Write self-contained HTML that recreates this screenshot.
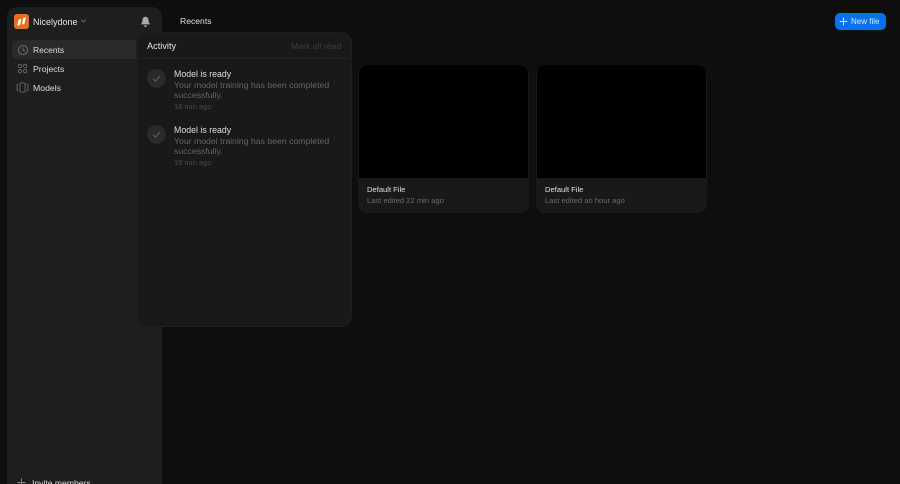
<!DOCTYPE html>
<html>
<head>
<meta charset="utf-8">
<style>
html,body{margin:0;padding:0;width:900px;height:484px;overflow:hidden;background:#0e0e0e;font-family:"Liberation Sans",sans-serif;}
#root{position:relative;width:900px;height:484px;overflow:hidden;background:#0e0e0e;}
.a{position:absolute;white-space:nowrap;}
#sidebar{left:7px;top:7px;width:155px;height:477px;background:#1e1e1e;border-radius:10px 10px 0 0;}
#rowsel{left:12px;top:40px;width:140px;height:19px;background:#2a2a2a;border-radius:5px;}
#logo{left:14px;top:14px;width:15px;height:15px;background:#e8701a;border-radius:3px;}
.t{color:#dcdcdc;font-size:8.7px;line-height:12px;}
.card{width:171px;height:148px;top:65px;background:#191919;border-radius:9px;overflow:hidden;}
.card .img{position:absolute;left:1px;top:0;width:169px;height:113px;background:#000;border-radius:8px 8px 0 0;}
.card .n{position:absolute;left:9px;top:119px;font-size:7.6px;line-height:12px;color:#e0e0e0;white-space:nowrap;}
.card .d{position:absolute;left:9px;top:130px;font-size:7.6px;line-height:12px;color:#6a6a6a;white-space:nowrap;}
#pop{left:137px;top:33px;width:214px;height:293px;background:#191919;border-radius:10px;box-shadow:0 0 0 1px #1e1e1e;}
#line{left:137px;top:58px;width:214px;height:1px;background:#222;}
.circ{width:19px;height:19px;border-radius:50%;background:#2a2a2a;}
.h{font-size:8.8px;line-height:12px;color:#dedede;}
.b{font-size:8.7px;line-height:10px;color:#646464;}
.m{font-size:7.6px;line-height:10px;color:#4a4a4a;}
#btn{left:835px;top:13px;width:51px;height:17px;background:#0a72e8;border-radius:5px;}
</style>
</head>
<body>
<div id="root">
<div class="a" id="sidebar"></div>
<div class="a" id="rowsel"></div>
<div class="a" id="logo"></div>
<svg class="a" style="left:14px;top:14px" width="15" height="15" viewBox="0 0 15 15"><path d="M3.2 11.6 L4.6 6.4 Q5 5 7.4 5 L6.3 10 Q5.9 11.6 3.2 11.6Z M7.8 10.4 L8.9 4.9 Q9.3 3.4 12 3.4 L10.8 8.7 Q10.4 10.4 7.8 10.4Z" fill="#fff"/></svg>
<div class="a t" style="left:33px;top:16px;font-size:9px;color:#e4e4e4">Nicelydone</div>
<svg class="a" style="left:80px;top:18px" width="7" height="6" viewBox="0 0 7 6"><path d="M1.2 1.8 L3.5 4 L5.8 1.8" fill="none" stroke="#7c7c7c" stroke-width=".8"/></svg>
<svg class="a" style="left:140px;top:16px" width="11" height="12" viewBox="0 0 11 12"><path d="M5.5 .8 C3.4 .8 2.5 2.4 2.5 4.2 C2.5 6.4 1.2 7.4 1 8.4 L10 8.4 C9.8 7.4 8.5 6.4 8.5 4.2 C8.5 2.4 7.6 .8 5.5 .8Z" fill="#a8a8a8"/><path d="M4 9.4 H7 C7 10.6 6.2 11 5.5 11 C4.8 11 4 10.6 4 9.4Z" fill="#a8a8a8"/></svg>
<svg class="a" style="left:16.5px;top:43.5px" width="12" height="12" viewBox="0 0 12 12"><circle cx="6" cy="6" r="4.5" fill="none" stroke="#7c7c7c" stroke-width=".8"/><path d="M6 3.2 V6 L7.8 7" fill="none" stroke="#7c7c7c" stroke-width=".8"/></svg>
<div class="a t" style="left:33px;top:44px;font-size:8.5px">Recents</div>
<svg class="a" style="left:17px;top:63px" width="11" height="11" viewBox="0 0 11 11"><g fill="none" stroke="#747474" stroke-width=".8"><circle cx="2.9" cy="2.9" r="1.7"/><circle cx="8.1" cy="2.9" r="1.7"/><circle cx="2.9" cy="8.1" r="1.7"/><circle cx="8.1" cy="8.1" r="1.7"/></g></svg>
<div class="a t" style="left:33px;top:63px">Projects</div>
<svg class="a" style="left:16px;top:82px" width="13" height="11" viewBox="0 0 14 12"><g fill="none" stroke="#747474" stroke-width=".85"><rect x="4.2" y="1" width="5.6" height="10" rx="1.5"/><path d="M2.6 2 Q1 2.4 1 4 V8 Q1 9.6 2.6 10"/><path d="M11.4 2 Q13 2.4 13 4 V8 Q13 9.6 11.4 10"/></g></svg>
<div class="a t" style="left:33px;top:82px">Models</div>
<svg class="a" style="left:17px;top:478px" width="9" height="9" viewBox="0 0 9 9"><path d="M4.5 .5 V8.5 M.5 4.5 H8.5" stroke="#8a8a8a" stroke-width=".9" fill="none"/></svg>
<div class="a t" style="left:32px;top:477px;font-size:8.6px">Invite members</div>

<div class="a" style="left:180px;top:15px;font-size:8.6px;line-height:12px;color:#e0e0e0">Recents</div>

<div class="a card" style="left:358px"><div class="img"></div><div class="n">Default File</div><div class="d">Last edited 22 min ago</div></div>
<div class="a card" style="left:536px"><div class="img"></div><div class="n">Default File</div><div class="d">Last edited an hour ago</div></div>

<div class="a" id="btn"></div>
<svg class="a" style="left:839px;top:17px" width="9" height="9" viewBox="0 0 9 9"><path d="M4.5 .8 V8.2 M.8 4.5 H8.2" stroke="#e8f2ff" stroke-width="1" fill="none"/></svg>
<div class="a" style="left:851px;top:16px;font-size:8px;line-height:12px;color:#dbe9fb">New file</div>

<div class="a" id="pop"></div>
<div class="a" id="line"></div>
<div class="a" style="left:147px;top:40px;font-size:9.2px;line-height:12px;color:#e4e4e4">Activity</div>
<div class="a" style="left:291px;top:40px;font-size:8.7px;line-height:12px;color:#3e3e3e">Mark all read</div>

<div class="a circ" style="left:147px;top:69px"></div>
<svg class="a" style="left:152px;top:74px" width="9" height="9" viewBox="0 0 9 9"><path d="M1 4.8 L3.4 7 L8 2" fill="none" stroke="#707070" stroke-width=".8"/></svg>
<div class="a h" style="left:174px;top:68px">Model is ready</div>
<div class="a b" style="left:174px;top:80px">Your model training has been completed<br>successfully.</div>
<div class="a m" style="left:174px;top:102px">18 min ago</div>

<div class="a circ" style="left:147px;top:125px"></div>
<svg class="a" style="left:152px;top:130px" width="9" height="9" viewBox="0 0 9 9"><path d="M1 4.8 L3.4 7 L8 2" fill="none" stroke="#707070" stroke-width=".8"/></svg>
<div class="a h" style="left:174px;top:124px">Model is ready</div>
<div class="a b" style="left:174px;top:136px">Your model training has been completed<br>successfully.</div>
<div class="a m" style="left:174px;top:158px">19 min ago</div>
</div>
</body>
</html>
